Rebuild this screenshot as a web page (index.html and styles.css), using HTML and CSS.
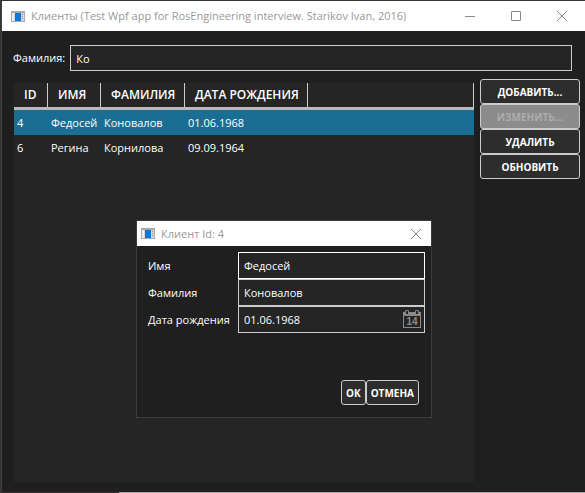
FILE: index.html
```html
<!DOCTYPE html>
<html lang="ru">
<head>
<meta charset="utf-8">
<title>Клиенты</title>
<link rel="stylesheet" href="styles.css">
</head>
<body>
<main class="window">
  <header class="titlebar">
    <svg class="app-icon" width="14" height="11" viewBox="0 0 14 11"><rect width="14" height="11" fill="#a9a9a9"/><rect x="1" y="2" width="12" height="8" fill="#d4d8dc"/><rect x="1" y="2" width="2" height="8" fill="#ededed"/><rect x="4" y="2" width="6" height="8" fill="#0a78d7"/><path d="M11 3.500h1M11 5.500h1M11 7.500h1" stroke="#999"/></svg>
    <h1 class="title">Клиенты (Test Wpf app for RosEngineering interview. Starikov Ivan, 2016)</h1>
    <button class="caption" aria-label="Свернуть"><svg width="10" height="10" viewBox="0 0 10 10"><path d="M0 5.5h10"/></svg></button>
    <button class="caption" aria-label="Развернуть"><svg width="10" height="10" viewBox="0 0 10 10"><path d="M.5 .5h9v9h-9z"/></svg></button>
    <button class="caption" aria-label="Закрыть"><svg width="10" height="10" viewBox="0 0 10 10"><path d="M0 0l10 10M10 0L0 10"/></svg></button>
  </header>
  <div class="search">
    <label for="search">Фамилия:</label>
    <input class="field" id="search" type="text" value="Ко">
  </div>
  <div class="content">
    <div class="grid">
      <table class="clients">
        <colgroup><col class="col-id"><col class="col-name"><col class="col-surname"><col class="col-date"><col></colgroup>
        <thead><tr><th>ID</th><th>ИМЯ</th><th>ФАМИЛИЯ</th><th>ДАТА РОЖДЕНИЯ</th><th></th></tr></thead>
        <tbody>
          <tr class="selected"><td>4</td><td>Федосей</td><td>Коновалов</td><td>01.06.1968</td><td></td></tr>
          <tr><td>6</td><td>Регина</td><td>Корнилова</td><td>09.09.1964</td><td></td></tr>
        </tbody>
      </table>
    </div>
    <div class="actions">
      <button class="button">ДОБАВИТЬ...</button>
      <button class="button" disabled>ИЗМЕНИТЬ...</button>
      <button class="button">УДАЛИТЬ</button>
      <button class="button">ОБНОВИТЬ</button>
    </div>
  </div>
</main>
<section class="dialog" role="dialog" aria-labelledby="dialog-title">
  <header class="titlebar titlebar-small">
    <svg class="app-icon" width="14" height="11" viewBox="0 0 14 11"><rect width="14" height="11" fill="#a9a9a9"/><rect x="1" y="2" width="12" height="8" fill="#d4d8dc"/><rect x="1" y="2" width="2" height="8" fill="#ededed"/><rect x="4" y="2" width="6" height="8" fill="#0a78d7"/><path d="M11 3.500h1M11 5.500h1M11 7.500h1" stroke="#999"/></svg>
    <h2 class="title" id="dialog-title">Клиент Id: 4</h2>
    <button class="caption" aria-label="Закрыть"><svg width="10" height="10" viewBox="0 0 10 10"><path d="M0 0l10 10M10 0L0 10"/></svg></button>
  </header>
  <form class="form">
    <label for="name">Имя</label>
    <input class="field active" id="name" type="text" value="Федосей">
    <label for="surname">Фамилия</label>
    <input class="field" id="surname" type="text" value="Коновалов">
    <label for="birth">Дата рождения</label>
    <div class="date">
      <input class="field" id="birth" type="text" value="01.06.1968">
      <button class="calendar" type="button" aria-label="Календарь"><svg width="18" height="18" viewBox="0 0 18 18"><path fill="#8a8a8a" fill-rule="evenodd" d="M0 2h2V1q0-1 2-1t2 1v1h6V1q0-1 2-1t2 1v1h2v16H0zM1 6v11h16V6zM3 1v3h2V1zM13 1v3h2V1z"/><text x="9" y="15" text-anchor="middle" class="calendar-day">14</text></svg></button>
    </div>
  </form>
  <footer class="dialog-actions">
    <button class="button">ОК</button>
    <button class="button">ОТМЕНА</button>
  </footer>
</section>
</body>
</html>
```
FILE: styles.css
```css
* { box-sizing: border-box; }

body {
  margin: 0;
  min-height: 100vh;
  display: flex;
  padding: 1px 0 1px 1px;
  background: linear-gradient(90deg, #353132 119px, #aaa4a5 119px) bottom / 100% 1px no-repeat #353539;
  color: #fff;
  font: 11px/16px "Open Sans", "Noto Sans", sans-serif;
}

button, input { font: inherit; color: inherit; }

.window {
  flex: 1;
  min-width: 0;
  display: flex;
  flex-direction: column;
  background: #1f1f1f;
  border-left: 1px solid #3f3f3f;
}

.titlebar {
  display: flex;
  align-items: center;
  height: 30px;
  padding-left: 9px;
  background: #fff;
  color: #999;
}

.app-icon { flex: none; margin-right: 6px; }

.title {
  flex: 1;
  margin: 0;
  font-size: 11px;
  font-weight: 400;
  white-space: nowrap;
}

.caption {
  display: grid;
  place-items: center;
  width: 46px;
  height: 100%;
  padding: 0;
  border: 0;
  background: none;
}

.caption path { fill: none; stroke: #8c8c8c; }

.search {
  display: flex;
  align-items: center;
  gap: 5px;
  padding: 14px 13px 0 11px;
}

.field {
  flex: 1;
  width: 100%;
  min-width: 0;
  height: 26px;
  padding: 0 5px;
  border: 1px solid #ccc;
  border-radius: 0;
  background: #252525;
  outline: 0;
}

.content {
  flex: 1;
  display: flex;
  gap: 6px;
  padding: 8px 5px 10px 12px;
}

.grid {
  flex: 1;
  margin-top: 4px;
  background: #252525;
}

.clients {
  width: 100%;
  table-layout: fixed;
  border-spacing: 0;
}

.col-id { width: 34px; }
.col-name { width: 53px; }
.col-surname { width: 84px; }
.col-date { width: 123px; }

.clients th {
  height: 27px;
  padding: 0 0 0 10px;
  border-bottom: 3px solid #bababa;
  background: linear-gradient(#ccc, #ccc) right / 1px 100% no-repeat;
  font-size: 12px;
  font-weight: 600;
  text-align: left;
  white-space: nowrap;
}

.clients td {
  height: 25px;
  padding: 0 0 0 3px;
  white-space: nowrap;
}

.selected { background: #1b6e93; }

.actions {
  display: flex;
  flex-direction: column;
  width: 100px;
}

.button {
  height: 25px;
  padding: 0 4px;
  border: 1px solid #ccc;
  border-radius: 3px;
  background: #2d2d2d;
  font-size: 10px;
  font-weight: 700;
}

.button:disabled {
  background: #8c8c8c;
  color: #adadad;
}

.dialog {
  position: absolute;
  left: 136px;
  top: 220px;
  width: 296px;
  background: #1f1f1f;
  border: 1px solid #3c3c3c;
}

.titlebar-small { height: 25px; padding-left: 4px; }
.titlebar-small .caption { width: 30px; }

.form {
  display: grid;
  grid-template-columns: 84px 1fr;
  grid-auto-rows: 27px;
  align-items: center;
  column-gap: 6px;
  padding: 6px 6px 0 11px;
}

.form .field { height: 27px; }
.form .active { border-color: #fff; }

.date { position: relative; }

.date .field { display: block; padding-right: 26px; }

.calendar {
  position: absolute;
  right: 4px;
  top: 4px;
  padding: 0;
  border: 0;
  background: none;
}

.calendar svg { display: block; }

.calendar-day {
  fill: #8a8a8a;
  font: 700 10px "Liberation Sans", sans-serif;
}

.dialog-actions {
  display: flex;
  justify-content: flex-end;
  padding: 47px 12px 12px;
}
```
